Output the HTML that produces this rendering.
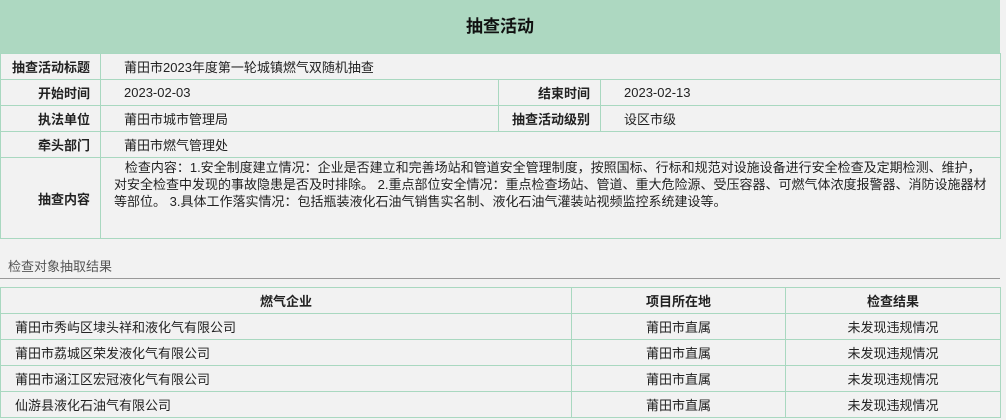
<!DOCTYPE html>
<html><head><meta charset="utf-8"><style>
body{margin:0;background:#f2f2f2;font-family:"Liberation Sans","Noto Sans CJK SC",sans-serif;font-size:13px;color:#222;width:1006px;height:420px;overflow:hidden;position:relative}
.hd{position:absolute;left:0;top:0;width:1000px;height:53px;background:#add8c1;text-align:center;line-height:53px;font-size:17px;font-weight:bold;color:#111}
table{border-collapse:collapse;position:absolute;left:0;table-layout:fixed}
td{border:1px solid #a9d8c0;padding:0;height:25px;overflow:hidden;white-space:nowrap}
.l{text-align:right;font-weight:bold;padding-right:10px}
.v{padding-left:23px}
.c{text-align:center}
.sec{position:absolute;left:8px;top:256px;font-size:13px;color:#555}
.line{position:absolute;left:0;top:278px;width:1000px;height:1px;background:#999}
</style></head><body>
<div class="hd">抽查活动</div>
<table style="top:53px;width:1000px">
<colgroup><col style="width:100px"><col style="width:398px"><col style="width:102px"><col style="width:400px"></colgroup>
<tr><td class="l">抽查活动标题</td><td class="v" colspan="3">莆田市2023年度第一轮城镇燃气双随机抽查</td></tr>
<tr><td class="l">开始时间</td><td class="v">2023-02-03</td><td class="l">结束时间</td><td class="v">2023-02-13</td></tr>
<tr><td class="l">执法单位</td><td class="v">莆田市城市管理局</td><td class="l">抽查活动级别</td><td class="v">设区市级</td></tr>
<tr><td class="l">牵头部门</td><td class="v" colspan="3">莆田市燃气管理处</td></tr>
<tr><td class="l" style="height:80px">抽查内容</td><td colspan="3" style="white-space:normal;vertical-align:top;padding:1px 12px 0 13px;line-height:17px">&nbsp;&nbsp;&nbsp;检查内容：1.安全制度建立情况：企业是否建立和完善场站和管道安全管理制度，按照国标、行标和规范对设施设备进行安全检查及定期检测、维护，对安全检查中发现的事故隐患是否及时排除。 2.重点部位安全情况：重点检查场站、管道、重大危险源、受压容器、可燃气体浓度报警器、消防设施器材等部位。 3.具体工作落实情况：包括瓶装液化石油气销售实名制、液化石油气灌装站视频监控系统建设等。</td></tr>
</table>
<div class="sec">检查对象抽取结果</div>
<div class="line"></div>
<table style="top:287px;width:1000px">
<colgroup><col style="width:571px"><col style="width:214px"><col style="width:215px"></colgroup>
<tr><td class="c" style="font-weight:bold">燃气企业</td><td class="c" style="font-weight:bold">项目所在地</td><td class="c" style="font-weight:bold">检查结果</td></tr>
<tr><td style="padding-left:14px">莆田市秀屿区埭头祥和液化气有限公司</td><td class="c">莆田市直属</td><td class="c">未发现违规情况</td></tr>
<tr><td style="padding-left:14px">莆田市荔城区荣发液化气有限公司</td><td class="c">莆田市直属</td><td class="c">未发现违规情况</td></tr>
<tr><td style="padding-left:14px">莆田市涵江区宏冠液化气有限公司</td><td class="c">莆田市直属</td><td class="c">未发现违规情况</td></tr>
<tr><td style="padding-left:14px">仙游县液化石油气有限公司</td><td class="c">莆田市直属</td><td class="c">未发现违规情况</td></tr>
</table>
</body></html>
